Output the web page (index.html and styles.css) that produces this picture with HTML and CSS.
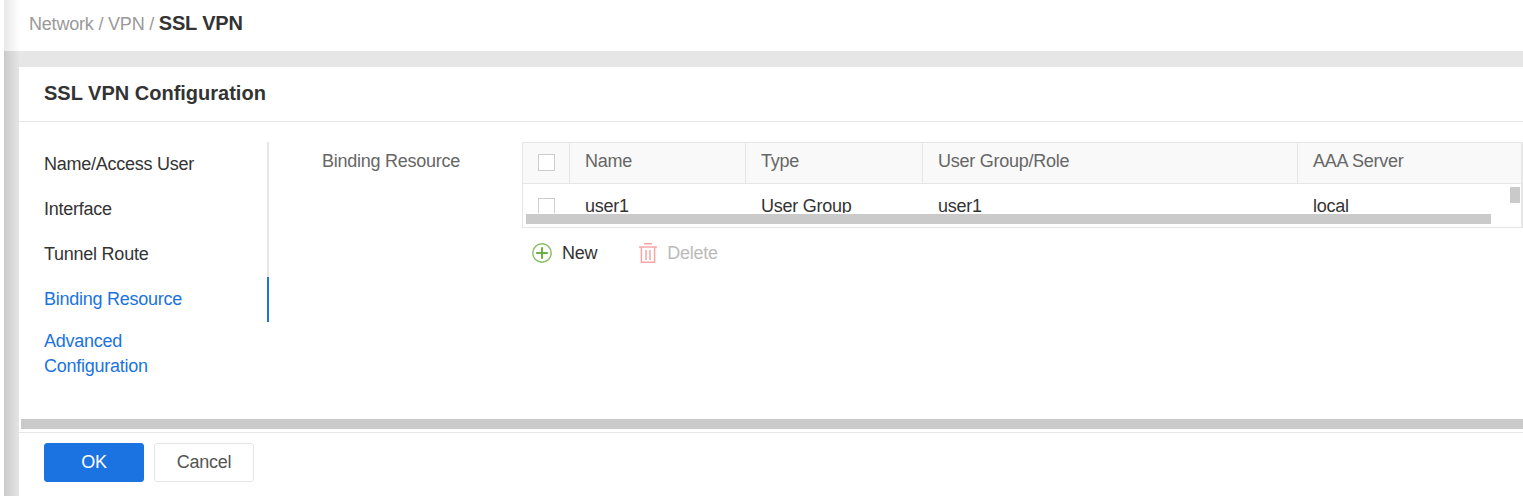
FILE: index.html
```html
<!DOCTYPE html>
<html lang="en">
<head>
    <meta charset="UTF-8">
    <title>SSL VPN</title>
    <link rel="stylesheet" href="styles.css">
</head>
<body>
    <div class="page">
        <div class="breadcrumb">
            <span>Network / VPN / </span><b>SSL VPN</b>
        </div>
        <div class="content">
            <div class="panel">
                <h2 class="panel-title">SSL VPN Configuration</h2>
                <div class="panel-body">
                    <ul class="steps">
                        <li>Name/Access User</li>
                        <li>Interface</li>
                        <li>Tunnel Route</li>
                        <li class="current">Binding Resource</li>
                        <li class="next">Advanced Configuration</li>
                    </ul>
                    <div class="form-row">
                        <label class="form-label">Binding Resource</label>
                        <div class="form-field">
                            <div class="table-box">
                                <div class="table-row table-head">
                                    <div class="col-check"><span class="checkbox"></span></div>
                                    <div class="col-name">Name</div>
                                    <div class="col-type">Type</div>
                                    <div class="col-group">User Group/Role</div>
                                    <div class="col-aaa">AAA Server</div>
                                </div>
                                <div class="table-scroll">
                                    <div class="table-row table-data">
                                        <div class="col-check"><span class="checkbox"></span></div>
                                        <div class="col-name">user1</div>
                                        <div class="col-type">User Group</div>
                                        <div class="col-group">user1</div>
                                        <div class="col-aaa">local</div>
                                    </div>
                                    <div class="thumb-v"></div>
                                    <div class="thumb-h"></div>
                                </div>
                            </div>
                            <div class="table-actions">
                                <button class="action">
                                    <svg width="20" height="20" viewBox="0 0 20 20" fill="none" stroke="#6cb043">
                                        <circle cx="10" cy="10" r="9.2" stroke="#85bd63" stroke-width="1.4"/>
                                        <path d="M10 4.2v11.6M4.2 10h11.6" stroke-width="2"/>
                                    </svg>
                                    New
                                </button>
                                <button class="action disabled">
                                    <svg width="18" height="20" viewBox="0 0 18 20" fill="none" stroke="#f6a6a6" stroke-width="1.5">
                                        <path d="M0 4h18M5 .8h8M2.4 4v15.2h13.2V4M7 7v10M11 7v10"/>
                                    </svg>
                                    Delete
                                </button>
                            </div>
                        </div>
                    </div>
                </div>
                <div class="bottom-scroll"><div class="thumb-bottom"></div></div>
                <div class="panel-footer">
                    <button class="btn btn-primary">OK</button>
                    <button class="btn">Cancel</button>
                </div>
            </div>
        </div>
    </div>
</body>
</html>
```

FILE: styles.css
```css
* {
    box-sizing: border-box;
}

html, body {
    height: 100%;
}

body {
    margin: 0;
    overflow: hidden;
    background: #fff;
    font-family: "Liberation Sans", Arial, sans-serif;
    font-size: 18px;
    letter-spacing: -0.25px;
    color: #333;
}

.page {
    height: 496px;
    margin-left: 4px;
    display: flex;
    flex-direction: column;
    background: #e6e6e6;
}

.breadcrumb {
    height: 51px;
    flex: none;
    padding: 11px 0 0 25px;
    font-size: 18px;
    line-height: 24px;
    letter-spacing: -0.2px;
    color: #999;
    background: linear-gradient(to right, #e8e8e8, #fff 16px);
}

.breadcrumb b {
    font-size: 20px;
    color: #333;
}

.content {
    flex: 1;
    min-height: 0;
    padding: 16px 0 0 15px;
    background: linear-gradient(to right, #cbcbcb, #e6e6e6 16px);
}

.panel {
    height: 100%;
    display: flex;
    flex-direction: column;
    background: #fff;
}

.panel-title {
    height: 55px;
    flex: none;
    margin: 0;
    padding: 0 0 0 25px;
    font-size: 20px;
    line-height: 53px;
    letter-spacing: 0;
    color: #333;
    border-bottom: 1px solid #e6e6e6;
}

.panel-body {
    flex: 1;
    min-height: 0;
    display: flex;
    padding: 20px 0 0 25px;
}

.steps {
    width: 225px;
    height: 180px;
    flex: none;
    margin: 0;
    padding: 0;
    list-style: none;
    border-right: 2px solid #e6e6e6;
}

.steps li {
    height: 45px;
    line-height: 45px;
    white-space: nowrap;
}

.steps .current {
    width: 225px;
    color: #1a73e0;
    border-right: 2px solid #1a73e0;
}

.steps .next {
    width: 150px;
    height: auto;
    padding-top: 7px;
    line-height: 25px;
    white-space: normal;
    color: #1a73e0;
}

.form-row {
    flex: 1;
    min-width: 0;
    display: flex;
    padding-left: 53px;
}

.form-label {
    width: 200px;
    flex: none;
    line-height: 38px;
    color: #666;
}

.form-field {
    flex: 1;
    min-width: 0;
}

.table-box {
    height: 86px;
    overflow: hidden;
    border: 1px solid #e6e6e6;
    border-right-width: 2px;
}

.table-row {
    display: flex;
}

.table-head {
    height: 41px;
    line-height: 37px;
    color: #666;
    background: #f9f9f9;
    border-bottom: 1px solid #e6e6e6;
}

.table-head > div {
    border-right: 1px solid #e6e6e6;
}

.table-head > div:last-child {
    border-right: 0;
}

.table-row > div {
    flex: none;
    padding-left: 15px;
}

.table-row .col-check {
    width: 47px;
    padding-left: 15px;
}

.col-name {
    width: 176px;
}

.col-type {
    width: 177px;
}

.col-group {
    width: 375px;
}

.table-row .col-aaa {
    flex: 1;
}

.checkbox {
    display: block;
    width: 17px;
    height: 17px;
    margin-top: 11px;
    background: #fff;
    border: 1px solid #ccc;
}

.table-scroll {
    position: relative;
    height: 43px;
    overflow: hidden;
}

.table-data {
    height: 29px;
    overflow: hidden;
    line-height: 44px;
}

.table-data .checkbox {
    margin-top: 14px;
}

.thumb-v {
    position: absolute;
    top: 3px;
    right: 1px;
    width: 10px;
    height: 16px;
    background: #cacaca;
}

.thumb-h {
    position: absolute;
    left: 3px;
    bottom: 3px;
    width: 965px;
    height: 10px;
    background: #cacaca;
}

.table-actions {
    display: flex;
    gap: 42px;
    margin-top: 12px;
    padding-left: 10px;
}

.action {
    display: flex;
    align-items: center;
    gap: 10px;
    height: 26px;
    padding: 0;
    border: 0;
    background: none;
    font: inherit;
    letter-spacing: inherit;
    color: #333;
}

.action.disabled {
    color: #bbb;
}

.bottom-scroll {
    height: 15px;
    flex: none;
    padding: 1px 0 0 2px;
    background: #fff;
    border-bottom: 1px solid #e6e6e6;
}

.thumb-bottom {
    height: 10px;
    background: #cacaca;
}

.panel-footer {
    flex: none;
    height: 63px;
    padding: 10px 0 0 25px;
    display: flex;
    gap: 10px;
    align-items: flex-start;
}

.btn {
    width: 100px;
    height: 39px;
    padding: 0;
    font: inherit;
    letter-spacing: inherit;
    color: #555;
    background: #fff;
    border: 1px solid #e6e6e6;
    border-radius: 3px;
}

.btn-primary {
    color: #fff;
    background: #1a73e0;
    border-color: #1a73e0;
}
```
